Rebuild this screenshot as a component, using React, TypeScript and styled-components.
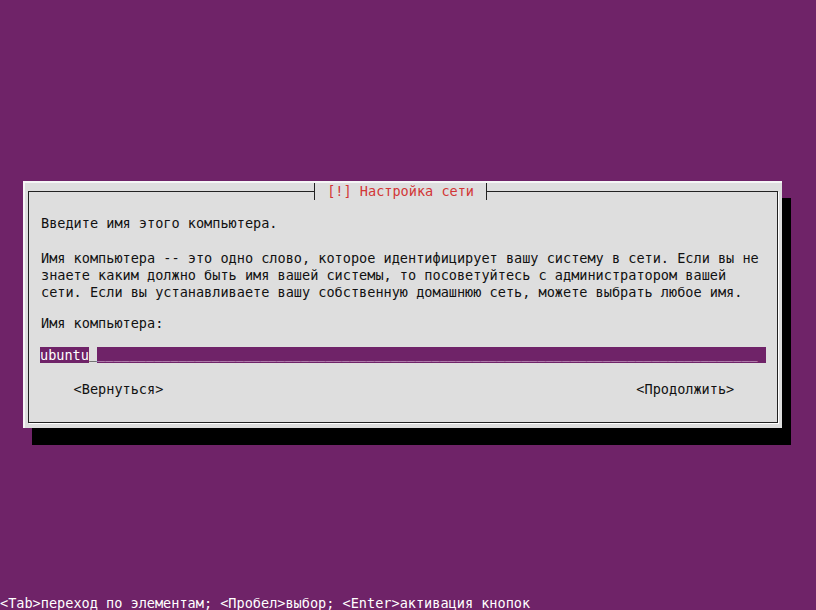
import React from 'react';
import styled, {createGlobalStyle} from 'styled-components';

const purple = '#6f2368';
const gray = '#dedede';

const GlobalStyle = createGlobalStyle`
  html, body {
    margin: 0;
    padding: 0;
    background: ${purple};
  }
`;

const Screen = styled.div`
  display: flex;
  flex-direction: column;
  width: 816px;
  height: 610px;
  overflow: hidden;
  background: ${purple};
  font-family: "DejaVu Sans Mono", "Liberation Mono", monospace;
  font-size: 13.55px;
  line-height: 17px;
`;

const Stage = styled.div`
  flex: 1;
  padding: 181px 0 0 23px;
`;

const Dialog = styled.div`
  box-sizing: border-box;
  width: 759px;
  height: 247px;
  padding: 8px 4px 0 3px;
  background: ${gray};
  border-top: 2px solid #f6f6f6;
  border-left: 2px solid #f6f6f6;
  box-shadow: 9px 17px 0 #000;
`;

const Frame = styled.div`
  position: relative;
  box-sizing: border-box;
  height: 232px;
  padding: 15px 0 0 12px;
  border: 1px solid #222;
  box-shadow: 1px 1px 0 #fff;
  color: #111;
`;

const Title = styled.div`
  position: absolute;
  top: -9px;
  left: 285px;
  height: 17px;
  padding: 0 1.5ch;
  background: ${gray};
  color: #d23636;
  border-left: 1px solid #222;
  border-right: 1px solid #222;
  white-space: pre;
`;

const Line = styled.p<{gap?: number}>`
  margin: ${({gap}) => gap ?? 0}px 0 0;
  white-space: pre;
`;

const Field = styled.div`
  display: flex;
  width: 89ch;
  height: 16px;
  margin: 15px 0 0 -1px;
  line-height: 16px;
`;

const Value = styled.span`
  background: ${purple};
  color: #fff;
  white-space: pre;
`;

const Cursor = styled.span`
  background: ${gray};
  color: #222;
  line-height: 13px;
`;

const Fill = styled.span`
  flex: 1;
  height: 16px;
  line-height: 12px;
  background: ${purple};
  color: #d9b8d6;
  white-space: pre;
`;

const Buttons = styled.div`
  display: flex;
  justify-content: space-between;
  margin: 18px 0 0 4ch;
  width: 81ch;
`;

const Button = styled.span`
  white-space: pre;
`;

const Status = styled.div`
  height: 14px;
  line-height: 14px;
  color: #fff;
  white-space: pre;
`;

export default function App() {
  return (
    <>
      <GlobalStyle />
      <Screen>
        <Stage>
          <Dialog>
            <Frame>
              <Title>[!] Настройка сети</Title>
              <Line gap={8}>Введите имя этого компьютера.</Line>
              <Line gap={18}>
                Имя компьютера -- это одно слово, которое идентифицирует вашу систему в сети. Если вы не
              </Line>
              <Line>знаете каким должно быть имя вашей системы, то посоветуйтесь с администратором вашей</Line>
              <Line>сети. Если вы устанавливаете вашу собственную домашнюю сеть, можете выбрать любое имя.</Line>
              <Line gap={14}>Имя компьютера:</Line>
              <Field>
                <Value>ubuntu</Value>
                <Cursor>_</Cursor>
                <Fill>{'_'.repeat(81)}</Fill>
              </Field>
              <Buttons>
                <Button>&lt;Вернуться&gt;</Button>
                <Button>&lt;Продолжить&gt;</Button>
              </Buttons>
            </Frame>
          </Dialog>
        </Stage>
        <Status>&lt;Tab&gt;переход по элементам; &lt;Пробел&gt;выбор; &lt;Enter&gt;активация кнопок</Status>
      </Screen>
    </>
  );
}
